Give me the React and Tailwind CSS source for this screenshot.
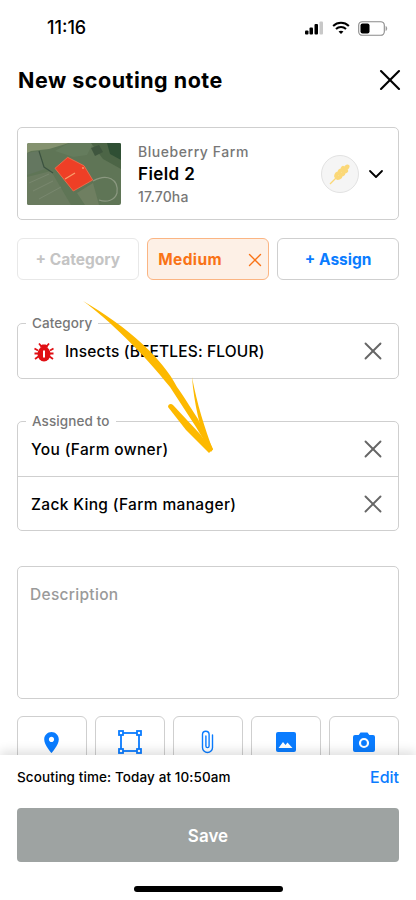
import { X, ChevronDown } from "lucide-react";

const font = { fontFamily: '"Inter", "Open Sans", sans-serif' };

function StatusBar() {
    return (
        <div className="flex h-[56px] shrink-0 items-center justify-between pl-[47px] pr-[20px]">
            <span className="text-[18px] leading-[20px] font-medium text-black">11:16</span>
            <div className="flex items-center gap-[8px] pr-[8px]">
                <svg width="20" height="14" viewBox="0 0 20 14">
                    <rect x="15.500" y="0.500" width="3.500" height="13" rx="1" fill="#c8c8c8" />
                    <rect x="10.500" y="3" width="3.500" height="10.500" rx="1" fill="#000" />
                    <rect x="5.500" y="6.500" width="3.500" height="7" rx="1" fill="#000" />
                    <rect x="1" y="9.500" width="3.500" height="4" rx="1" fill="#000" />
                </svg>
                <svg width="18" height="14" viewBox="0 0 19 14" fill="none" stroke="#000" strokeWidth="2.200">
                    <path d="M1.200 4.800C6 .4 13 .4 17.800 4.800" />
                    <path d="M4.200 8C7.200 5.300 11.800 5.300 14.800 8" />
                    <path d="M9.500 13.400 6.900 10.700C8.400 9.500 10.600 9.500 12.100 10.700Z" fill="#000" stroke="none" />
                </svg>
                <svg width="30" height="15" viewBox="0 0 30 15" fill="none">
                    <rect x="0.700" y="0.700" width="25.600" height="13.600" rx="3.600" stroke="#8a8a8a" strokeWidth="1.100" />
                    <rect x="2.500" y="2.500" width="9" height="10" rx="2" fill="#000" />
                    <path d="M27.600 5v5c1-.3 1.600-1.300 1.600-2.500S28.600 5.300 27.600 5Z" fill="#9a9a9a" />
                </svg>
            </div>
        </div>
    );
}

function FieldThumb() {
    return (
        <svg width="94" height="62" viewBox="0 0 94 62" className="shrink-0 rounded-[2px]">
            <rect width="94" height="62" fill="#5f7556" />
            <path d="M0 0H42L22 6 4 8 0 10Z" fill="#84926f" />
            <path d="M42 0H66L60 12 46 14 28 8Z" fill="#657c5d" />
            <path d="M64 0H94V26L76 16Z" fill="#4c6546" />
            <path d="M80 0H94V17L83 11Z" fill="#2f4f34" />
            <path d="M64 5 72 2 76 9 68 13Z" fill="#3f563e" />
            <path d="M0 10 12 8 18 26 0 32Z" fill="#647760" />
            <path d="M0 34 24 28 44 62H0Z" fill="#6a7b5f" />
            <path d="M50 50 66 40 72 62H58Z" fill="#6f7f61" />
            <path d="M6 48 26 38M12 56 34 44M2 40 22 31" stroke="#7c8a72" strokeWidth="0.800" />
            <path d="M12 8 17 24 26 30" stroke="#3c5340" strokeWidth="1.200" fill="none" />
            <path d="M66 38C80 30 92 36 90 50 88 57 80 60 72 57" stroke="#8b9880" strokeWidth="1.200" fill="none" />
            <path d="M40.700 14.300 57 22.700 65.700 37 46.300 48 28 25.300Z" fill="#ee3f26" stroke="#f5704f" strokeWidth="0.800" />
            <path d="M38 36 48 30" stroke="#f9a06d" strokeWidth="1.300" />
            <circle cx="56" cy="25" r="0.900" fill="#f9a06d" />
        </svg>
    );
}

function WheatIcon() {
    return (
        <svg width="22" height="22" viewBox="0 0 22 22" fill="#fbd878">
            <path d="M1 21 9 13" stroke="#fbd878" strokeWidth="1.200" />
            <ellipse cx="10" cy="14.500" rx="2.100" ry="3.300" transform="rotate(70 10 14.500)" />
            <ellipse cx="7.500" cy="12" rx="2.100" ry="3.300" transform="rotate(20 7.500 12)" />
            <ellipse cx="13" cy="11.500" rx="2.100" ry="3.300" transform="rotate(70 13 11.500)" />
            <ellipse cx="10.500" cy="9" rx="2.100" ry="3.300" transform="rotate(20 10.500 9)" />
            <ellipse cx="16" cy="8.500" rx="2.100" ry="3.300" transform="rotate(70 16 8.500)" />
            <ellipse cx="13.500" cy="6" rx="2.100" ry="3.300" transform="rotate(20 13.500 6)" />
            <ellipse cx="17.500" cy="4.500" rx="2.300" ry="3.500" transform="rotate(45 17.500 4.500)" />
        </svg>
    );
}

function Beetle() {
    return (
        <svg width="20" height="20" viewBox="0 0 20 20" className="shrink-0">
            <g stroke="#e00f14" strokeWidth="1.800" fill="none">
                <path d="M5 1.500 7 4M15 1.500 13 4" />
                <path d="M0.500 6.500 4 8.500M19.500 6.500 16 8.500M0.500 11.500H4M19.500 11.500H16M1 17 4.500 14.500M19 17 15.500 14.500" />
            </g>
            <path d="M6 5.500C6 3 8 2.500 10 2.500S14 3 14 5.500Z" fill="#e00f14" />
            <ellipse cx="10" cy="12" rx="6.500" ry="7.500" fill="#e00f14" />
            <rect x="9" y="8.500" width="2" height="7" fill="#fff" />
        </svg>
    );
}

function Chip({ className, children }) {
    return (
        <div className={"flex h-[42px] items-center rounded-[6px] border pt-[2px] text-[15.500px] font-bold " + className}>
            {children}
        </div>
    );
}

function Row({ children, border, className }) {
    return (
        <div className={"flex h-[54px] items-center justify-between pt-[2px] pr-[10px] text-[15.500px] font-medium text-black " + (border ? "border-t border-[#cfcfcf] " : "") + className}>
            <div className="flex items-center gap-[11px]">{children}</div>
            <X size={30} strokeWidth={1.500} className="-mt-[2px] text-[#666]" />
        </div>
    );
}

function LabelBox({ label, children }) {
    return (
        <div className="relative rounded-[5px] border border-[#cfcfcf]">
            <span className="absolute -top-[10px] left-[8px] bg-white px-[6px] text-[13.500px] leading-[18px] font-medium tracking-[0.1px] text-[#777]">
                {label}
            </span>
            {children}
        </div>
    );
}

function ToolButton({ children }) {
    return (
        <div className="flex h-[70px] justify-center rounded-[6px] border border-[#cfcfcf] pt-[13px]">
            {children}
        </div>
    );
}

export default function App() {
    return (
        <main className="flex h-[900px] w-[416px] flex-col overflow-hidden bg-white" style={font}>
            <StatusBar />

            <div className="relative min-h-0 flex-1 overflow-hidden px-[17px]">
                <div className="flex h-[48px] items-center justify-between pl-[1px]">
                    <h1 className="text-[21.500px] font-bold tracking-[0.5px] text-black">New scouting note</h1>
                    <X size={36} strokeWidth={1.400} className="-mr-[9px] text-black" />
                </div>

                <section className="mt-[23px] flex h-[93px] items-center rounded-[5px] border border-[#cfcfcf] pl-[9px] pr-[10px]">
                    <FieldThumb />
                    <div className="mt-[2px] ml-[17px] flex-1">
                        <p className="text-[14px] leading-[20px] font-medium tracking-[0.55px] text-[#777]">Blueberry Farm</p>
                        <p className="text-[17px] leading-[24px] font-semibold tracking-[0.4px] text-black">Field 2</p>
                        <p className="text-[14px] leading-[22px] font-medium tracking-[0.2px] text-[#777]">17.70ha</p>
                    </div>
                    <div className="flex h-[38px] w-[38px] items-center justify-center rounded-full border border-[#e2e2e2] bg-[#f5f5f5]">
                        <WheatIcon />
                    </div>
                    <ChevronDown size={24} strokeWidth={1.800} className="ml-[5px] text-black" />
                </section>

                <div className="mt-[18px] grid grid-cols-3 gap-[8.500px]">
                    <Chip className="justify-center border-[#e8e8e8] text-[#c4c4c4]">+ Category</Chip>
                    <Chip className="justify-between border-[#fbb583] bg-[#fdf0e6] pl-[10px] pr-[2px] tracking-[0.4px] text-[#f97316]">
                        Medium
                        <X size={22} strokeWidth={1.500} />
                    </Chip>
                    <Chip className="justify-center border-[#cfcfcf] text-[#0a7cff]">+ Assign</Chip>
                </div>

                <div className="mt-[43px]">
                    <LabelBox label="Category">
                        <Row className="pl-[16px] tracking-[0.15px]">
                            <Beetle />
                            Insects (BEETLES: FLOUR)
                        </Row>
                    </LabelBox>
                </div>

                <div className="mt-[42px]">
                    <LabelBox label="Assigned to">
                        <Row className="pl-[13px] tracking-[0.35px]">You (Farm owner)</Row>
                        <Row border className="pl-[13px] tracking-[0.35px]">Zack King (Farm manager)</Row>
                    </LabelBox>
                </div>

                <div className="mt-[35px] h-[133px] rounded-[5px] border border-[#cfcfcf] px-[12px] py-[18px] text-[15.500px] leading-[20px] font-medium tracking-[0.3px] text-[#9a9a9a]">
                    Description
                </div>

                <div className="mt-[17px] grid grid-cols-5 gap-[8.500px]">
                    <ToolButton>
                        <svg width="25" height="25" viewBox="0 0 24 24" fill="#0a7cff">
                            <path d="M12 2C8.130 2 5 5.130 5 9c0 5.250 7 13 7 13s7-7.750 7-13c0-3.870-3.130-7-7-7zm0 9.500c-1.380 0-2.500-1.120-2.500-2.500s1.120-2.500 2.500-2.500 2.500 1.120 2.500 2.500-1.120 2.500-2.500 2.500z" />
                        </svg>
                    </ToolButton>
                    <ToolButton>
                        <svg width="24" height="24" viewBox="0 0 24 24" fill="#fff" stroke="#0a7cff" strokeWidth="1.800">
                            <rect x="3" y="3" width="18" height="18" fill="none" />
                            <rect x="1" y="1" width="4" height="4" />
                            <rect x="19" y="1" width="4" height="4" />
                            <rect x="1" y="19" width="4" height="4" />
                            <rect x="19" y="19" width="4" height="4" />
                        </svg>
                    </ToolButton>
                    <ToolButton>
                        <svg width="13" height="24" viewBox="0 0 13 24" fill="none" stroke="#0a7cff" strokeWidth="1.400" strokeLinecap="round">
                            <path d="M11.500 5V17.500a5 5 0 0 1-10 0V4.500a3.300 3.300 0 0 1 6.600 0V16a1.600 1.600 0 0 1-3.200 0V6" />
                        </svg>
                    </ToolButton>
                    <ToolButton>
                        <svg width="20" height="20" viewBox="0 0 20 20" className="mt-[2px]">
                            <rect width="20" height="20" rx="2" fill="#0a7cff" />
                            <path d="M2.500 16 7 10l2.500 3 2-2.500 5 5.500Z" fill="#fff" />
                        </svg>
                    </ToolButton>
                    <ToolButton>
                        <svg width="24" height="24" viewBox="0 0 24 24">
                            <path d="M8.500 2.500h7L17.300 5H21a2 2 0 0 1 2 2v13a2 2 0 0 1-2 2H3a2 2 0 0 1-2-2V7a2 2 0 0 1 2-2h3.700Z" fill="#0a7cff" />
                            <circle cx="12" cy="13" r="4" fill="none" stroke="#fff" strokeWidth="2.200" />
                        </svg>
                    </ToolButton>
                </div>

                {/* yellow arrow drawn over the form */}
                <svg width="140" height="170" viewBox="0 0 140 170" className="pointer-events-none absolute left-[78px] top-[243px]">
                    <g fill="#fdb900">
                        <path d="M5 2C30 20 65 54 92 88L118 128 133 153 135 150 120 120C112 108 105 96 99 88 85 60 50 28 5 2Z" />
                        <path d="M90 108C90 105 93 104 95 106L122 135 134 151 131 154 108 131Z" />
                        <path d="M114 78C119 105 127 130 135 151L130 152C122 128 116 105 114 78Z" />
                    </g>
                </svg>
            </div>

            <footer className="relative shrink-0 bg-white px-[17px] shadow-[0_-4px_10px_rgba(0,0,0,0.12)]">
                <div className="flex h-[53px] items-center justify-between pb-[9px]">
                    <span className="text-[13.500px] font-medium tracking-[0.1px] text-black">Scouting time: Today at 10:50am</span>
                    <span className="text-[16px] font-medium text-[#0a7cff]">Edit</span>
                </div>
                <button className="flex h-[54px] w-full items-center justify-center rounded-[4px] bg-[#9ea3a2] pt-[3px] text-[17px] font-semibold text-white">
                    Save
                </button>
                <div className="flex h-[38px] items-end justify-center pb-[8px]">
                    <div className="h-[6px] w-[149px] rounded-full bg-black" />
                </div>
            </footer>
        </main>
    );
}
